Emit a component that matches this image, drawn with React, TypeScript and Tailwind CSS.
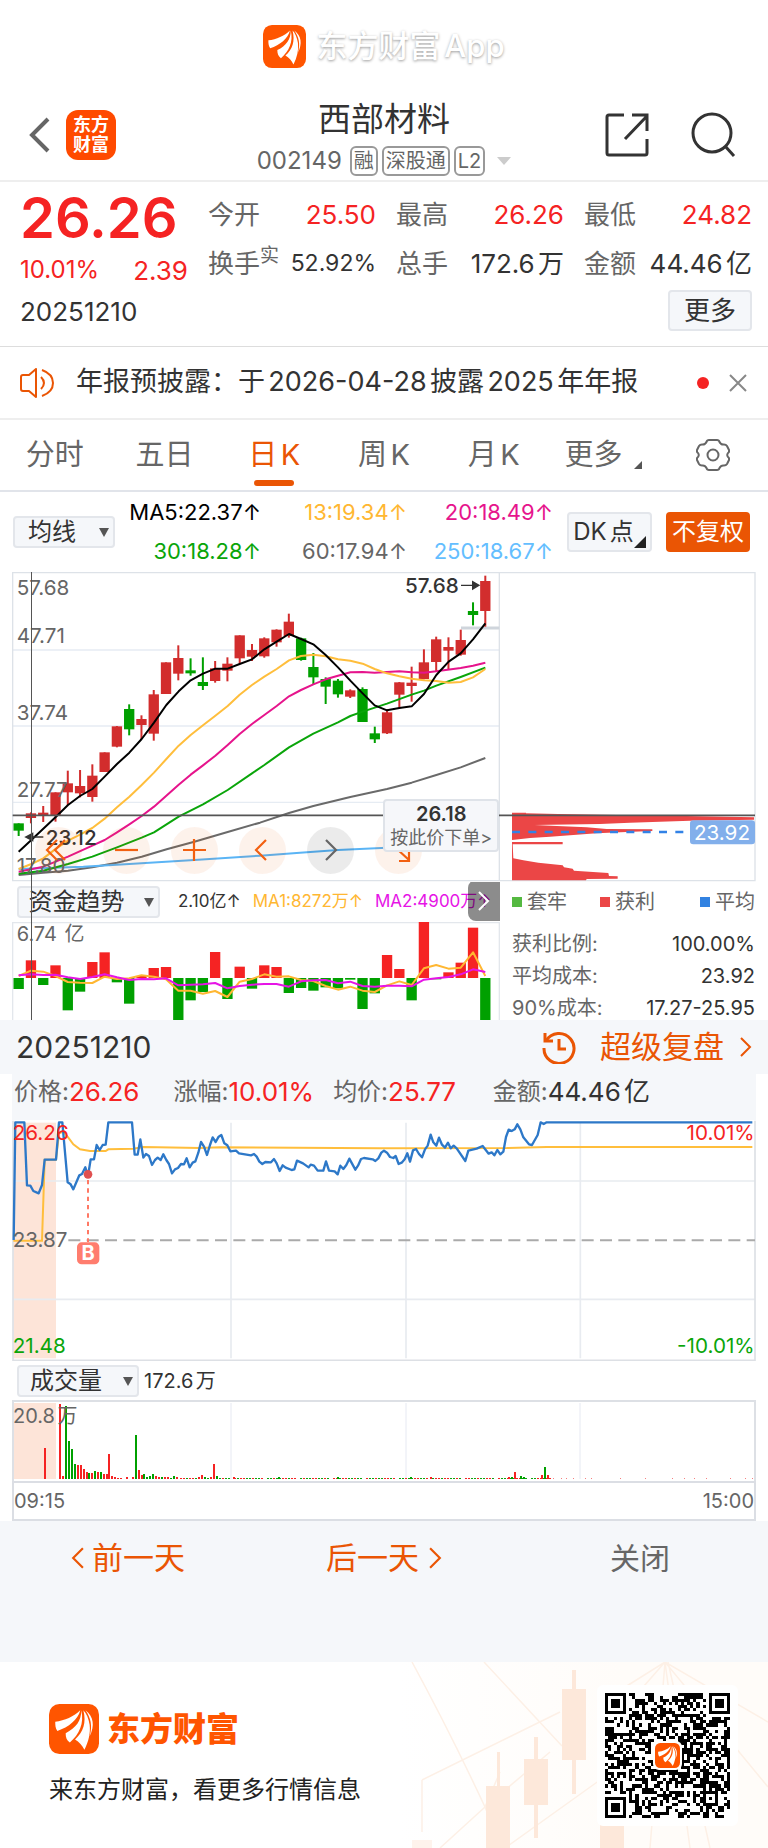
import React from "react";

type Pt = [number, number];
const toPoints = (pts: Pt[]) => pts.map((p) => p.join(",")).join(" ");

/* ---------- shared marks ---------- */

function BrandMark({ className }: { className: string }) {
  return (
    <svg viewBox="0 0 48 48" className={className} aria-hidden="true">
      <rect width="48" height="48" rx="10" fill="#ff5500" />
      <g fill="#fff">
        <path d="M6 17C15 16 24 12 30 6C28 15 19 22 8 26C6 23 6 20 6 17Z" />
        <path d="M31 6C31 16 26 23 16 28C16 32 17 35 20 37C29 29 34 19 31 6Z" />
        <path d="M33 6C36 18 33 27 25 34C29 36 32 40 34 44C38 36 40 28 39 20C38 14 36 9 33 6Z" />
        <path d="M35 6C40 13 42 21 39 31C44 21 43 12 35 6Z" />
      </g>
    </svg>
  );
}

function Chevron({ dir, className }: { dir: "left" | "right"; className: string }) {
  return (
    <svg viewBox="0 0 12 20" className={className} fill="none" stroke="currentColor" strokeWidth="2" aria-hidden="true">
      <path d={dir === "left" ? "M11 1L2 10L11 19" : "M1 1L10 10L1 19"} />
    </svg>
  );
}

function Picker({ label, name, className }: { label: string; name: string; className: string }) {
  return (
    <div className={"relative h-8 shrink-0 " + className}>
      <select
        aria-label={name}
        className="h-full w-full appearance-none rounded border-2 border-[#e3e6eb] bg-[#f5f7fa] pr-8 pl-2 text-center text-[24px] leading-7 text-[#333]"
      >
        <option>{label}</option>
      </select>
      <svg viewBox="0 0 10 9" className="pointer-events-none absolute top-3 right-1.5 w-2.5" aria-hidden="true">
        <path d="M0 0H10L5 9Z" fill="#555" />
      </svg>
    </div>
  );
}

/* ---------- header ---------- */

function Header() {
  return (
    <header className="grid h-[92px] grid-cols-[1fr_auto_1fr] items-center border-b-2 border-[#eee] px-6">
      <div className="flex items-center gap-4">
        <button aria-label="返回" className="pl-1 text-[#666]">
          <svg viewBox="0 0 22 36" className="h-9 w-[22px]" fill="none" stroke="currentColor" strokeWidth="4">
            <path d="M20 2L4 18L20 34" />
          </svg>
        </button>
        <a
          href="#home"
          className="flex h-[50px] w-[50px] flex-col items-center justify-center rounded-xl bg-[#ff4a00] text-[18px] leading-5 font-bold text-white"
        >
          <span>东方</span>
          <span>财富</span>
        </a>
      </div>
      <div className="flex flex-col items-center pt-1">
        <h1 className="text-[33px] leading-[48px] text-[#333]">西部材料</h1>
        <div className="flex h-9 items-center gap-1 text-[20px] text-[#666]">
          <span className="mr-1 text-[24px]">002149</span>
          <span className="flex h-[30px] items-center rounded-md border-2 border-[#999] px-0.5">融</span>
          <span className="flex h-[30px] items-center rounded-md border-2 border-[#999] px-0.5">深股通</span>
          <span className="flex h-[30px] items-center rounded-md border-2 border-[#999] px-0.5">L2</span>
          <svg viewBox="0 0 14 8" className="ml-2 w-3.5" aria-hidden="true">
            <path d="M0 0H14L7 8Z" fill="#ccc" />
          </svg>
        </div>
      </div>
      <div className="flex items-center justify-end gap-10 pr-2 text-[#333]">
        <button aria-label="分享">
          <svg viewBox="0 0 46 46" className="h-[46px] w-[46px]" fill="none" stroke="currentColor" strokeWidth="3">
            <path d="M20 3H5Q3 3 3 5V41Q3 43 5 43H41Q43 43 43 41V27" />
            <path d="M21 27L43 4M28 3H43V19" />
          </svg>
        </button>
        <button aria-label="搜索">
          <svg viewBox="0 0 46 46" className="h-[46px] w-[46px]" fill="none" stroke="currentColor" strokeWidth="3">
            <circle cx="22" cy="21" r="19" />
            <path d="M35 34L44 44" />
          </svg>
        </button>
      </div>
    </header>
  );
}

/* ---------- quote ---------- */

const quotes = [
  { k: "今开", v: "25.50", style: "text-[26px] text-[#f52323]" },
  { k: "最高", v: "26.26", style: "text-[26px] text-[#f52323]" },
  { k: "最低", v: "24.82", style: "text-[26px] text-[#f52323]" },
  { k: "换手", sup: "实", v: "52.92%", style: "text-[23px] text-[#333]" },
  { k: "总手", v: "172.6万", style: "text-[26px] text-[#333]" },
  { k: "金额", v: "44.46亿", style: "text-[26px] text-[#333]" },
];

function Quote() {
  return (
    <section className="flex h-[165px] gap-5 border-b border-[#ddd] pt-2 pr-4 pl-5">
      <div className="w-[168px] shrink-0">
        <div className="text-[56px] leading-[56px] font-semibold text-[#f52323]">26.26</div>
        <div className="flex h-12 items-center justify-between text-[#f52323]">
          <span className="text-[24px]">10.01%</span>
          <span className="text-[26px]">2.39</span>
        </div>
        <div className="text-[26px] leading-9 text-[#333]">20251210</div>
      </div>
      <div className="flex-1">
        <dl className="grid grid-cols-3 gap-x-5">
          {quotes.map((q) => (
            <div key={q.k} className="flex h-[49px] items-center justify-between whitespace-nowrap">
              <dt className="flex text-[26px] text-[#666]">
                {q.k}
                {q.sup && <span className="text-[19px] leading-6">{q.sup}</span>}
              </dt>
              <dd className={q.style}>{q.v}</dd>
            </div>
          ))}
        </dl>
        <div className="flex justify-end pt-0.5">
          <button className="h-[41px] w-[84px] rounded border-2 border-[#e3e6eb] bg-[#f5f7fa] text-[26px] leading-9 text-[#333]">
            更多
          </button>
        </div>
      </div>
    </section>
  );
}

function Notice() {
  return (
    <section className="flex h-[73px] items-center border-b-2 border-[#eee] pr-[21px] pl-5">
      <svg viewBox="0 0 34 30" className="h-[30px] w-[34px] shrink-0" fill="none" stroke="#ea5504" strokeWidth="2" aria-hidden="true">
        <path d="M16 1V29L9 23H3Q1 23 1 21V9Q1 7 3 7H9Z" strokeLinejoin="round" />
        <path d="M21 9Q27 15 21 21M22 2Q33 6 33 15Q33 24 22 28" />
      </svg>
      <a href="#notice" className="ml-[22px] flex-1 text-[27px] whitespace-nowrap text-[#333]">
        年报预披露：于2026-04-28披露2025年年报
      </a>
      <span className="mr-5 h-3 w-3 rounded-full bg-[#f52323]" />
      <button aria-label="关闭提示" className="text-[#888]">
        <svg viewBox="0 0 18 18" className="w-[18px]" stroke="currentColor" strokeWidth="2">
          <path d="M1 1L17 17M17 1L1 17" />
        </svg>
      </button>
    </section>
  );
}

function Tabs() {
  const tabs = ["分时", "五日", "日K", "周K", "月K"];
  return (
    <nav className="grid h-[72px] grid-cols-7 border-b-2 border-[#e1e4ea] text-[29px] text-[#666]">
      {tabs.map((t) => (
        <button key={t} className={t === "日K" ? "relative text-[#ea5504]" : "relative"}>
          {t}
          {t === "日K" && <span className="absolute bottom-1 left-1/2 h-1.5 w-10 -translate-x-1/2 rounded bg-[#ea5504]" />}
        </button>
      ))}
      <button className="flex items-center justify-center gap-3">
        更多
        <svg viewBox="0 0 9 9" className="mt-5 w-2" aria-hidden="true">
          <path d="M9 0V9H0Z" fill="#555" />
        </svg>
      </button>
      <button aria-label="设置" className="flex items-center justify-center">
        <svg viewBox="0 0 34 32" className="w-[34px]" fill="none" stroke="#666" strokeWidth="2" strokeLinejoin="round">
          <path d="M13 1H21Q23 1 23.500 3Q25 6 28 5.500Q30 5.500 31 7L33 11Q33.500 13 32 14Q30.500 16 32 18Q33.500 19 33 21L31 25Q30 26.500 28 26.500Q25 26 23.500 29Q23 31 21 31H13Q11 31 10.500 29Q9 26 6 26.500Q4 26.500 3 25L1 21Q0.500 19 2 18Q3.500 16 2 14Q0.500 13 1 11L3 7Q4 5.500 6 5.500Q9 6 10.500 3Q11 1 13 1Z" />
          <circle cx="17" cy="16" r="5.500" />
        </svg>
      </button>
    </nav>
  );
}

function Averages() {
  return (
    <section className="flex h-20 items-center pr-[18px] pl-[13px]">
      <Picker label="均线" name="指标" className="w-[102px]" />
      <div className="grid flex-1 grid-cols-3 text-right text-[22px] leading-[39px] whitespace-nowrap">
        <span className="text-black">MA5:22.37↑</span>
        <span className="text-[#ffb732]">13:19.34↑</span>
        <span className="text-[#e6148c]">20:18.49↑</span>
        <span className="text-[#0aa50a]">30:18.28↑</span>
        <span className="text-[#666]">60:17.94↑</span>
        <span className="text-[#64beff]">250:18.67↑</span>
      </div>
      <button className="relative ml-3.5 h-10 w-[85px] rounded border-2 border-[#e3e6eb] bg-[#f5f7fa] pr-4 pl-1 text-[24px] leading-8 whitespace-nowrap text-[#333]">
        DK点
        <svg viewBox="0 0 12 12" className="absolute right-1 bottom-0.5 w-3" aria-hidden="true">
          <path d="M12 0V12H0Z" fill="#222" />
        </svg>
      </button>
      <button className="ml-3.5 h-10 w-[84px] rounded bg-[#ea5504] text-[24px] text-white">不复权</button>
    </section>
  );
}

/* ---------- daily candles (three drawing units per pixel) ---------- */

const X0 = 56;
const STEP = 36.84;
const barX = (i: number) => X0 + STEP * i;

type Candle = [string, number, number, number, number];
const candles: Candle[] = [
  ["g", 790, 790, 812, 828], ["r", 757, 760, 774, 790], ["r", 738, 758, 766, 786], ["r", 697, 697, 766, 785],
  ["r", 632, 670, 697, 735], ["r", 630, 678, 700, 712], ["r", 613, 647, 711, 725], ["r", 577, 577, 636, 636],
  ["r", 498, 499, 560, 562], ["g", 433, 447, 508, 526], ["r", 466, 477, 495, 537], ["r", 390, 403, 521, 542],
  ["r", 307, 307, 402, 402], ["r", 256, 294, 341, 361], ["g", 295, 331, 340, 347], ["g", 292, 366, 378, 390],
  ["r", 303, 325, 363, 368], ["r", 292, 311, 332, 364], ["r", 226, 226, 295, 312], ["r", 252, 270, 290, 303],
  ["r", 232, 235, 289, 293], ["r", 208, 209, 247, 260], ["r", 161, 185, 228, 233], ["g", 233, 235, 300, 302],
  ["g", 279, 321, 352, 373], ["g", 352, 357, 380, 432], ["g", 357, 362, 403, 413], ["r", 388, 391, 410, 414],
  ["g", 382, 387, 486, 486], ["g", 500, 520, 538, 549], ["r", 448, 457, 520, 522], ["r", 366, 367, 404, 444],
  ["r", 320, 368, 378, 425], ["r", 268, 307, 357, 358], ["r", 230, 238, 306, 333], ["r", 232, 261, 272, 330],
  ["r", 209, 240, 284, 287], ["g", 127, 153, 165, 196], ["r", 47, 63, 153, 200],
];

const ma5: Pt[] = [[56, 875], [94, 840], [168, 770], [204, 735], [240, 708], [277, 687], [314, 650], [351, 612], [388, 578], [425, 537], [462, 488], [499, 435], [536, 394], [572, 361], [609, 341], [646, 326], [683, 326], [719, 312], [756, 298], [793, 268], [830, 245], [867, 222], [903, 237], [940, 253], [977, 285], [1014, 322], [1051, 362], [1088, 400], [1124, 436], [1161, 451], [1198, 444], [1235, 439], [1272, 402], [1309, 345], [1346, 305], [1382, 280], [1419, 238], [1456, 190]];
const ma13: Pt[] = [[56, 927], [94, 912], [130, 895], [168, 866], [204, 842], [240, 824], [277, 804], [314, 776], [351, 742], [388, 710], [425, 675], [462, 638], [499, 597], [536, 557], [572, 525], [609, 496], [646, 467], [683, 438], [719, 404], [756, 375], [793, 350], [830, 327], [867, 301], [903, 288], [940, 284], [977, 289], [1014, 298], [1051, 302], [1088, 311], [1124, 327], [1161, 340], [1198, 349], [1235, 356], [1272, 361], [1309, 363], [1346, 368], [1382, 366], [1419, 352], [1456, 327]];
const ma20: Pt[] = [[56, 935], [130, 920], [204, 890], [277, 857], [314, 840], [351, 817], [388, 793], [425, 768], [462, 740], [499, 707], [536, 674], [572, 644], [609, 616], [646, 587], [683, 555], [719, 522], [756, 492], [793, 465], [830, 438], [867, 409], [903, 390], [940, 373], [977, 358], [1014, 347], [1051, 337], [1088, 336], [1124, 338], [1198, 334], [1235, 337], [1272, 338], [1309, 334], [1382, 324], [1419, 317], [1456, 308]];
const ma30: Pt[] = [[56, 941], [130, 932], [204, 912], [277, 890], [351, 862], [425, 833], [462, 817], [536, 770], [609, 733], [683, 690], [756, 640], [793, 615], [867, 562], [940, 521], [1014, 487], [1051, 468], [1088, 455], [1161, 431], [1235, 404], [1272, 392], [1309, 377], [1382, 351], [1456, 323]];
const ma60: Pt[] = [[56, 945], [130, 938], [204, 932], [277, 922], [351, 908], [425, 890], [500, 868], [583, 845], [683, 816], [780, 788], [867, 759], [940, 738], [1051, 711], [1161, 687], [1235, 668], [1309, 645], [1382, 622], [1456, 594]];
const ma250: Pt[] = [[56, 927], [250, 920], [400, 911], [583, 900], [780, 887], [900, 878], [1014, 870], [1160, 863]];

const costProfile: Pt[] = [[66, 98], [108, 98], [108, 100], [204, 102], [330, 104], [590, 108], [792, 112], [792, 119], [600, 122], [420, 128], [330, 132], [134, 135], [200, 138], [290, 142], [350, 147], [487, 148], [487, 153], [390, 157], [320, 160], [240, 166], [180, 170], [120, 174], [66, 180], [66, 186], [218, 186], [218, 193], [68, 193], [70, 235], [100, 241], [145, 248], [218, 256], [222, 262], [248, 266], [252, 272], [355, 279], [357, 288], [383, 289], [383, 296], [290, 297], [288, 301], [66, 301]];

const tools = [
  { name: "最左", d: "M22 13L12 23L22 33M30 13L20 23L30 33", tone: "warm" },
  { name: "缩小", d: "M12 23H35", tone: "warm" },
  { name: "放大", d: "M12 23H35M23 12V34", tone: "warm" },
  { name: "左移", d: "M27 13L17 23L27 33", tone: "warm" },
  { name: "右移", d: "M19 13L29 23L19 33", tone: "cool" },
  { name: "全屏", d: "M22 22L34 33M34 24V34H24", tone: "warm" },
];

function CandleChart() {
  const axis: [string, number][] = [["57.68", 83], ["47.71", 228], ["37.74", 457], ["27.77", 688], ["17.80", 917]];
  return (
    <div className="relative">
      <svg viewBox="0 36 2304 930" className="block w-full" fontSize="62" role="img" aria-label="日K线图">
        <g stroke="#e6ecf3" strokeWidth="4">
          <path d="M38 270H1498M38 498H1498M38 727H1498" />
        </g>
        <path d="M38 38H2265V962H38ZM1498 38V962" fill="none" stroke="#dde2e8" strokeWidth="4" />
        <path d="M1383 204H1498" stroke="#cfd5dc" strokeWidth="9" />
        {candles.map(([c, hi, top, bot, lo], i) => {
          const fill = c === "r" ? "#d22d2d" : "#00a000";
          return (
            <g key={i} fill={fill}>
              <rect x={barX(i) - 3} y={hi} width="6" height={lo - hi} />
              <rect x={barX(i) - 15.5} y={top} width="31" height={bot - top} />
            </g>
          );
        })}
        <g fill="none" strokeWidth="6" strokeLinejoin="round">
          <polyline points={toPoints(ma60)} stroke="#6a6a6a" />
          <polyline points={toPoints(ma250)} stroke="#5ab4f5" />
          <polyline points={toPoints(ma30)} stroke="#0aa50a" />
          <polyline points={toPoints(ma20)} stroke="#e6148c" />
          <polyline points={toPoints(ma13)} stroke="#ffbe3c" />
          <polyline points={toPoints(ma5)} stroke="#000" />
        </g>
        {axis.map(([t, y]) => (
          <text key={t} x="50" y={y + 22} fill="#666">{t}</text>
        ))}
        <g fontWeight="500" fill="#333">
          <text x="137" y="855">23.12</text>
          <text x="1376" y="98" textAnchor="end">57.68</text>
        </g>
        <path d="M90 831H130M77 831L98 820V842ZM1383 76H1425M1437 76L1418 65V87Z" fill="#333" stroke="#333" strokeWidth="4" />
        <polygon points={toPoints(costProfile.map(([x, y]) => [x + 1470, y + 660] as Pt))} fill="#eb4646" />
        <path d="M38 766H2265" stroke="#555" strokeWidth="5" />
        <path d="M1536 816H2052" stroke="#3282e6" strokeWidth="7" strokeDasharray="24 25" />
        <rect x="2070" y="781" width="195" height="72" rx="10" fill="#82afeb" />
        <text x="2250" y="839" textAnchor="end" fill="#fff">23.92</text>
      </svg>
      <div className="absolute bottom-2 left-[4.6%] flex gap-[21px]">
        {tools.map((t) => (
          <button
            key={t.name}
            aria-label={t.name}
            className={
              t.tone === "warm"
                ? "h-[47px] w-[47px] rounded-full bg-[#ea5504]/8 text-[#f26011]"
                : "h-[47px] w-[47px] rounded-full bg-black/8 text-[#666]"
            }
          >
            <svg viewBox="0 0 47 47" fill="none" stroke="currentColor" strokeWidth="2.2">
              <path d={t.d} />
            </svg>
          </button>
        ))}
      </div>
      <button className="absolute right-[35%] bottom-[30px] h-[53px] w-[116px] rounded border-2 border-[#dfe3e9] bg-[#f6f7fa] whitespace-nowrap text-[#666]">
        <span className="block text-[20px] leading-6 font-semibold text-[#333]">26.18</span>
        <span className="block text-[18px] leading-6">按此价下单&gt;</span>
      </button>
    </div>
  );
}

/* ---------- capital trend ---------- */

const flow: [string, number][] = [
  ["g", 327], ["r", 241], ["g", 315], ["r", 256], ["g", 391], ["g", 335], ["r", 246], ["r", 217], ["g", 307], ["g", 371],
  ["r", 288], ["r", 264], ["r", 261], ["g", 420], ["g", 361], ["g", 336], ["r", 216], ["g", 357], ["r", 260], ["g", 326],
  ["r", 256], ["r", 261], ["g", 339], ["g", 324], ["g", 332], ["g", 322], ["g", 325], ["g", 299], ["g", 387], ["g", 340],
  ["r", 225], ["r", 267], ["g", 361], ["r", 126], ["g", 298], ["r", 277], ["r", 248], ["r", 143], ["g", 420],
];
const flowMa1 = [288, 272, 275, 288, 306, 308, 309, 290, 297, 295, 286, 290, 298, 332, 332, 341, 333, 351, 305, 297, 283, 290, 289, 300, 303, 318, 329, 320, 332, 336, 316, 304, 315, 265, 255, 266, 263, 217, 288];
const flowMa2 = [286, 283, 285, 284, 292, 297, 291, 283, 292, 300, 297, 298, 295, 316, 314, 313, 309, 325, 318, 314, 312, 312, 320, 304, 301, 300, 310, 305, 318, 320, 317, 317, 319, 299, 295, 291, 283, 268, 276];

function Trend() {
  const stats = [["获利比例:", "100.00%"], ["平均成本:", "23.92"], ["90%成本:", "17.27-25.95"]];
  return (
    <div className="grid h-[138px] grid-cols-[minmax(0,500fr)_minmax(0,268fr)] overflow-hidden">
      <div className="relative min-w-0">
        <div className="flex h-10 items-center pl-[17px] text-[17px] whitespace-nowrap [text-autospace:no-autospace]">
          <Picker label="资金趋势" name="副图指标" className="w-[143px]" />
          <span className="ml-[18px] text-[#333]">2.10亿↑</span>
          <span className="ml-3 text-[#ffb732]">MA1:8272万↑</span>
          <span className="ml-3 text-[#e614e6]">MA2:4900万↑</span>
        </div>
        <button aria-label="展开" className="absolute -top-0.5 right-0 flex h-[41px] w-8 items-center justify-center rounded-l-lg bg-black/45 text-white">
          <Chevron dir="right" className="h-5 w-3" />
        </button>
        <svg viewBox="0 126 1500 294" className="block w-full" fontSize="60" role="img" aria-label="资金趋势图">
          <path d="M38 420V128H1498V420" fill="none" stroke="#e3e7ec" strokeWidth="4" />
          <text x="50" y="182" fill="#666">6.74亿</text>
          {flow.map(([c, y], i) => (
            <rect key={i} x={barX(i) - 15.5} y={Math.min(294, y)} width="31" height={Math.abs(294 - y)} fill={c === "r" ? "#f52323" : "#00a000"} />
          ))}
          <g fill="none" strokeWidth="6" strokeLinejoin="round">
            <polyline points={toPoints(flowMa1.map((y, i) => [barX(i), y] as Pt))} stroke="#ffb732" />
            <polyline points={toPoints(flowMa2.map((y, i) => [barX(i), y] as Pt))} stroke="#e614e6" />
          </g>
        </svg>
      </div>
      <div className="pr-[13px] pl-3 text-[20px] leading-6 text-[#666]">
        <div className="flex h-10 items-center justify-between">
          <span className="flex items-center gap-[5px]"><i className="h-2.5 w-2.5 bg-[#55b941]" />套牢</span>
          <span className="mr-3 flex items-center gap-[5px]"><i className="h-2.5 w-2.5 bg-[#eb4646]" />获利</span>
          <span className="flex items-center gap-[5px]"><i className="h-2.5 w-2.5 bg-[#3282e1]" />平均</span>
        </div>
        <dl className="flex flex-col gap-2 pt-2.5">
          {stats.map(([k, v]) => (
            <div key={k} className="flex h-6 items-center justify-between whitespace-nowrap">
              <dt>{k}</dt>
              <dd className="text-[#333]">{v}</dd>
            </div>
          ))}
        </dl>
      </div>
    </div>
  );
}

/* ---------- replay ---------- */

function ReplayHead() {
  return (
    <>
      <div className="flex h-[54px] items-center justify-between bg-[#f5f7fa] pr-4 pl-4">
        <span className="text-[30px] text-[#333]">20251210</span>
        <a href="#replay" className="flex items-center text-[31px] leading-[54px] text-[#ea5504]">
          <svg viewBox="0 0 34 34" className="mr-6 w-[34px]" fill="none" stroke="currentColor" strokeWidth="3" aria-hidden="true">
            <path d="M4 11A15 15 0 1 1 2 18" />
            <path d="M3 3V11H11M17 9V19H24" />
          </svg>
          超级复盘
          <Chevron dir="right" className="ml-4 h-5 w-3" />
        </a>
      </div>
      <dl className="mx-3 grid h-[46px] grid-cols-[160fr_160fr_160fr_264fr] bg-[#f5f7fa] pl-0.5 text-[24px] leading-9 whitespace-nowrap text-[#666]">
        <div className="flex"><dt>价格:</dt><dd className="text-[26px] text-[#f52323]">26.26</dd></div>
        <div className="flex"><dt>涨幅:</dt><dd className="text-[26px] text-[#f52323]">10.01%</dd></div>
        <div className="flex"><dt>均价:</dt><dd className="text-[26px] text-[#f52323]">25.77</dd></div>
        <div className="flex"><dt>金额:</dt><dd className="text-[26px] text-[#333]">44.46亿</dd></div>
      </dl>
    </>
  );
}

const price: Pt[] = [[41, 420], [46, 67], [73, 67], [81, 256], [91, 257], [100, 273], [116, 280], [126, 255], [134, 179], [168, 179], [177, 67], [187, 67], [203, 247], [212, 253], [220, 268], [238, 226], [246, 222], [256, 202], [264, 228], [272, 178], [282, 178], [290, 135], [299, 150], [308, 135], [317, 134], [325, 67], [396, 67], [404, 164], [413, 164], [421, 118], [430, 173], [438, 162], [447, 168], [456, 195], [465, 180], [473, 173], [482, 180], [490, 163], [499, 180], [507, 192], [516, 220], [525, 208], [534, 204], [543, 192], [552, 193], [560, 175], [569, 202], [578, 188], [586, 184], [595, 158], [603, 126], [612, 140], [621, 165], [630, 135], [638, 112], [647, 126], [656, 110], [664, 105], [673, 130], [682, 136], [691, 154], [708, 152], [717, 160], [735, 163], [753, 166], [762, 162], [770, 170], [778, 185], [787, 192], [796, 186], [813, 187], [822, 177], [830, 190], [839, 213], [848, 196], [857, 203], [875, 210], [883, 208], [891, 182], [909, 190], [926, 202], [932, 194], [942, 197], [953, 212], [970, 212], [978, 184], [987, 212], [1004, 214], [1013, 223], [1021, 197], [1030, 207], [1039, 195], [1048, 176], [1066, 209], [1074, 197], [1083, 177], [1092, 174], [1118, 178], [1126, 183], [1135, 175], [1144, 158], [1152, 152], [1161, 158], [1170, 171], [1180, 174], [1187, 168], [1196, 192], [1205, 188], [1214, 178], [1222, 160], [1230, 185], [1239, 151], [1248, 147], [1257, 162], [1266, 172], [1275, 148], [1283, 137], [1292, 104], [1300, 127], [1309, 137], [1317, 113], [1326, 134], [1335, 143], [1344, 128], [1352, 145], [1361, 137], [1370, 145], [1396, 183], [1405, 152], [1430, 146], [1448, 138], [1466, 161], [1475, 157], [1483, 166], [1492, 150], [1501, 163], [1510, 155], [1518, 111], [1526, 89], [1535, 93], [1544, 88], [1552, 73], [1561, 88], [1570, 112], [1587, 133], [1596, 135], [1613, 105], [1622, 67], [1631, 72], [1640, 67], [2257, 67]];
const average: Pt[] = [[40, 422], [126, 422], [134, 179], [168, 179], [177, 100], [190, 95], [205, 113], [220, 133], [240, 148], [270, 153], [317, 153], [325, 148], [400, 146], [430, 141], [600, 144], [660, 142], [1140, 145], [1520, 144], [1640, 141], [2257, 141]];

function Intraday() {
  return (
    <svg viewBox="0 60 2304 723" className="block w-full" fontSize="62" role="img" aria-label="分时图">
      <rect x="40" y="68" width="128" height="707" fill="#fde4d8" />
      <path d="M40 243H2265M40 598H2265M693 68V775M1218 68V775M1741 68V775" stroke="#e8ebf0" strokeWidth="5" />
      <path d="M39 62V781H2265V62" fill="none" stroke="#dde0e5" strokeWidth="5" />
      <path d="M205 421H2265" stroke="#aaa" strokeWidth="6" strokeDasharray="36 19" />
      <polyline points={toPoints(average)} fill="none" stroke="#ffbe3c" strokeWidth="6" />
      <polyline points={toPoints(price)} fill="none" stroke="#2d78c8" strokeWidth="7" strokeLinejoin="round" />
      <path d="M264 240V426" stroke="#ff7864" strokeWidth="6" strokeDasharray="13 12" />
      <circle cx="264" cy="223" r="13" fill="#e05050" />
      <rect x="231" y="427" width="67" height="66" rx="14" fill="#ff7d6e" />
      <text x="264" y="481" fontSize="60" fontWeight="700" fill="#fff" textAnchor="middle">B</text>
      <text x="38" y="121" fill="#f52323">26.26</text>
      <text x="38" y="441" fill="#666">23.87</text>
      <text x="38" y="759" fill="#0aa50a">21.48</text>
      <text x="2264" y="121" fill="#f52323" textAnchor="end">10.01%</text>
      <text x="2264" y="759" fill="#0aa50a" textAnchor="end">-10.01%</text>
    </svg>
  );
}

/* x, height and colour of the taller volume bars */
const volumes: [number, number, string][] = [
  [45, 31, "r"], [60, 75, "r"], [63, 3, "r"], [66, 73, "g"], [69, 38, "g"], [72, 30, "g"], [75, 15, "g"], [78, 14, "r"],
  [81, 14, "r"], [84, 10, "r"], [87, 7, "r"], [89, 6, "g"], [92, 6, "r"], [95, 8, "g"], [98, 7, "r"], [101, 7, "g"],
  [104, 5, "r"], [107, 5, "r"], [109, 25, "r"], [112, 3, "r"], [115, 2, "r"], [118, 1, "r"], [121, 1, "r"], [127, 2, "r"],
  [133, 2, "r"], [136, 44, "g"], [139, 9, "r"], [142, 4, "r"], [144, 5, "g"], [147, 2, "g"], [150, 3, "g"], [153, 5, "g"],
  [156, 3, "r"], [159, 2, "r"], [162, 2, "g"], [165, 2, "r"], [168, 2, "r"], [171, 1, "g"], [174, 3, "g"], [177, 2, "r"],
  [199, 2, "r"], [202, 4, "r"], [205, 2, "g"], [211, 2, "r"], [214, 15, "r"], [217, 3, "g"], [234, 2, "r"], [279, 2, "g"],
  [338, 2, "g"], [411, 2, "g"], [431, 2, "r"], [509, 2, "r"], [512, 2, "g"], [515, 7, "r"], [521, 3, "g"], [524, 2, "g"],
  [542, 4, "r"], [545, 12, "g"], [548, 4, "r"],
];
const lowVolumes = Array.from({ length: 127 }, (_, i) => 180 + i * 3).filter((x) => x < 552 && (x * 7) % 11 !== 0);
const sparse = [553, 561, 566, 573, 585, 591, 620, 645, 672, 684, 694, 706, 730, 745, 752];

function Volume() {
  return (
    <>
      <div className="flex h-[39px] items-center pl-[17px]">
        <Picker label="成交量" name="成交指标" className="w-[122px]" />
        <span className="ml-[5px] text-[20px] text-[#333]">172.6万</span>
      </div>
      <svg viewBox="0 1400 768 81" className="block w-full" fontSize="20" role="img" aria-label="成交量图">
        <rect x="13" y="1403" width="43" height="76" fill="#fde4d8" />
        <path d="M231 1403V1479M406 1403V1479M580 1403V1479" stroke="#e6e9f2" />
        <path d="M13 1481V1401H755V1481" fill="none" stroke="#dde0e5" strokeWidth="2" />
        {lowVolumes.map((x) => (
          <rect key={x} x={x} y={1478} width="2" height="1" fill={(x * 13) % 17 < 9 ? "#0aa50a" : "#f52323"} />
        ))}
        {sparse.map((x) => (
          <rect key={x} x={x} y={1478} width="1" height="1" fill="#f58080" />
        ))}
        {volumes.map(([x, h, c]) => (
          <rect key={x} x={x - 1} y={1479 - h} width="2" height={h} fill={c === "r" ? "#f52323" : "#00a000"} />
        ))}
        <text x="13" y="1423" fill="#666">20.8万</text>
      </svg>
      <div className="mx-3 flex h-10 items-center justify-between border-2 border-[#dbdee4] text-[20px] text-[#666]">
        <span>09:15</span>
        <span>15:00</span>
      </div>
    </>
  );
}

function DayNav() {
  return (
    <nav className="grid h-[141px] grid-cols-3 items-start bg-[#f5f7fa] text-[31px] leading-[74px] text-[#ea5504]">
      <button className="flex items-center justify-center gap-2">
        <Chevron dir="left" className="h-[22px] w-[13px]" />
        前一天
      </button>
      <button className="flex items-center justify-center gap-2.5">
        后一天
        <Chevron dir="right" className="h-[22px] w-[13px]" />
      </button>
      <button className="text-[30px] text-[#666]">关闭</button>
    </nav>
  );
}

/* ---------- footer ---------- */

const N = 41;
function finder(x: number, y: number): boolean | null {
  const corners = [[0, 0], [N - 7, 0], [0, N - 7]];
  for (const [cx, cy] of corners) {
    const dx = x - cx;
    const dy = y - cy;
    if (dx >= -1 && dx <= 7 && dy >= -1 && dy <= 7) {
      const d = Math.max(Math.abs(dx - 3), Math.abs(dy - 3));
      return d === 3 || d <= 1;
    }
  }
  const d = Math.max(Math.abs(x - 34), Math.abs(y - 34));
  if (d <= 2) return d !== 1;
  return null;
}
function codePath() {
  let seed = 20251210;
  let d = "";
  for (let y = 0; y < N; y++)
    for (let x = 0; x < N; x++) {
      seed = (Math.imul(seed, 1103515245) + 12345) & 0x7fffffff;
      const f = finder(x, y);
      const on = f === null ? ((seed >> 16) & 255) < 132 : f;
      if (on) d += "M" + x + " " + y + "h1v1h-1z";
    }
  return d;
}

function Footer() {
  return (
    <footer className="relative flex h-[186px] items-center justify-between overflow-hidden bg-white pr-[30px] pl-[49px]">
      <svg viewBox="0 0 368 186" className="absolute top-0 right-0 h-full" aria-hidden="true">
        <defs>
          <linearGradient id="wash" x1="0" x2="1">
            <stop offset="0" stopColor="#fff" />
            <stop offset="0.6" stopColor="#fffcf9" />
          </linearGradient>
        </defs>
        <rect width="368" height="186" fill="url(#wash)" />
        <g fill="none" stroke="#fdf0e6" strokeWidth="1.500">
          <path d="M12 0Q50 70 85 145L102 186M22 118L160 50M84 0L162 84M85 145L100 110M40 186L85 145L150 90M105 186L200 118M265 0L214 32M265 0L230 40M265 0L250 186M265 0L290 186M265 0L368 60M265 0L368 125M268 0L310 186M22 118V170" />
        </g>
        <g fill="#fde8da">
          <path d="M86 124h24v62h-24zM97 90h3v34h-3z" />
          <path d="M124 97h24v46h-24zM134 75h4v101h-4z" />
          <path d="M162 27h24v71h-24zM172 8h4v124h-4z" />
          <path d="M200 163h24v23h-24z" />
          <path d="M12 178h20v8h-20z" opacity="0.5" />
        </g>
      </svg>
      <div className="relative">
        <div className="flex items-center gap-2">
          <BrandMark className="h-[50px] w-[50px]" />
          <span className="text-[33px] leading-[50px] font-black text-[#ff5500]">东方财富</span>
        </div>
        <p className="pt-5 text-[24px] leading-8 text-[#222]">来东方财富，看更多行情信息</p>
      </div>
      <div className="relative rounded-md bg-white p-2">
        <svg viewBox="0 0 41 41" className="h-[125px] w-[125px]" shapeRendering="crispEdges" role="img" aria-label="二维码">
          <path d={codePath()} fill="#000" />
        </svg>
        <div className="absolute inset-0 flex items-center justify-center">
          <span className="rounded-md bg-white p-0.5">
            <BrandMark className="h-[25px] w-[25px]" />
          </span>
        </div>
      </div>
    </footer>
  );
}

export default function App() {
  return (
    <main className="w-full overflow-hidden bg-white font-['Inter','Noto_Sans_CJK_SC',sans-serif] [text-autospace:normal]">
      <div className="flex h-[90px] items-center justify-center gap-2.5 pt-0.5">
        <BrandMark className="h-[43px] w-[43px]" />
        <span className="text-[31px] leading-10 font-medium text-white [text-shadow:0_1px_3px_rgba(0,0,0,0.4)]">东方财富App</span>
      </div>
      <Header />
      <Quote />
      <Notice />
      <Tabs />
      <Averages />
      <div className="relative">
        <CandleChart />
        <Trend />
        <span className="absolute top-0 bottom-0 left-[4.1%] w-px bg-[#555]" />
      </div>
      <ReplayHead />
      <Intraday />
      <Volume />
      <DayNav />
      <Footer />
    </main>
  );
}
